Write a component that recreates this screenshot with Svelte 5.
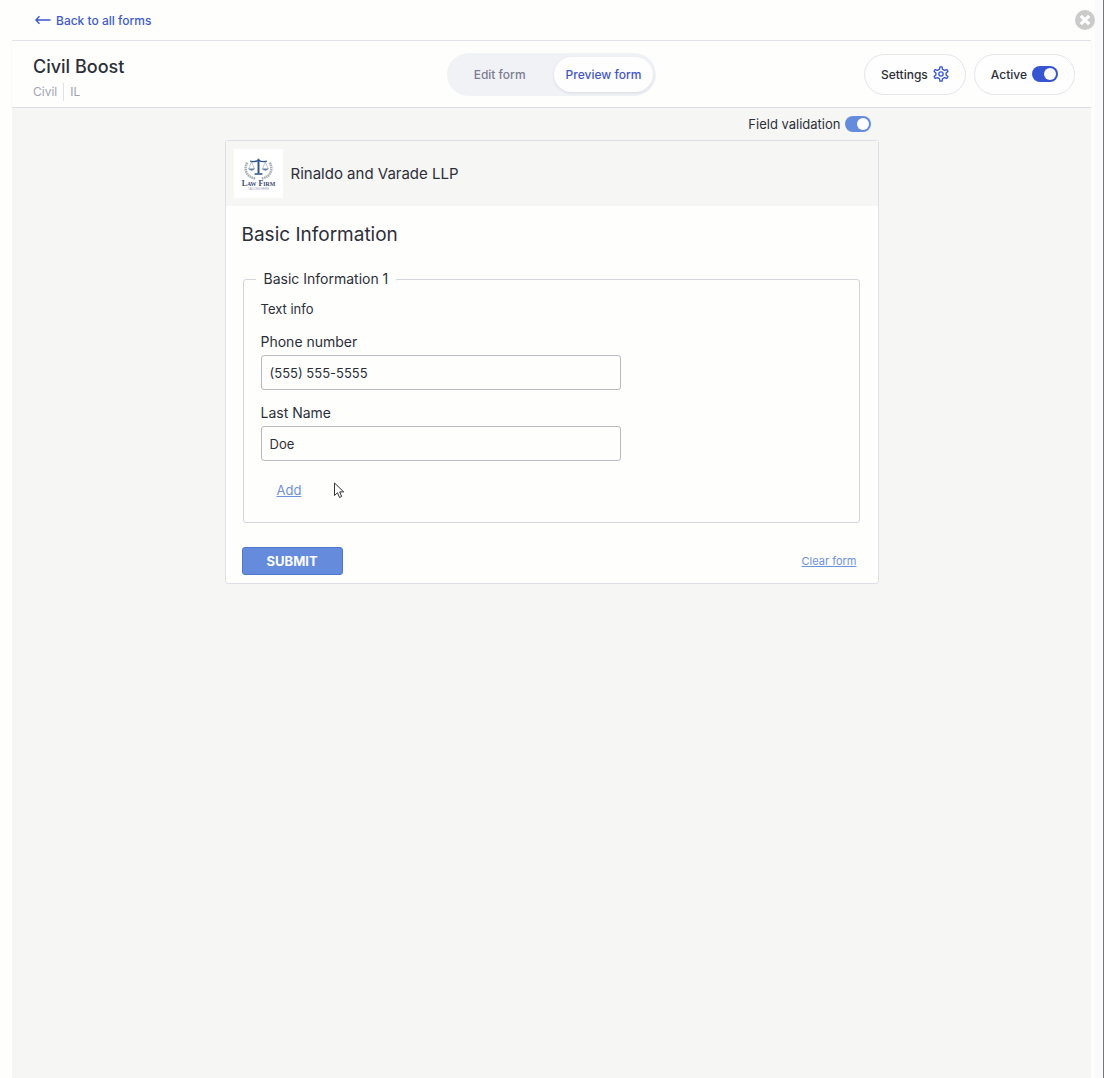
<script>
  let active = $state(true);
  let validation = $state(true);
  let phone = $state('(555) 555-5555');
  let lastName = $state('Doe');

  function clearForm() {
    phone = '';
    lastName = '';
  }
</script>

<div class="modal">
  <button class="close" aria-label="Close">
    <svg width="20" height="20" viewBox="0 0 20 20" aria-hidden="true">
      <circle cx="10" cy="10" r="10" fill="#cbcbcb" />
      <path d="M5.800 5.800l8.400 8.400M14.200 5.800l-8.400 8.400" stroke="#fff" stroke-width="3.200" />
    </svg>
  </button>

  <nav class="back-bar">
    <a class="back" href="#forms">
      <svg width="16" height="10" viewBox="0 0 16 10" fill="none" stroke="#3a56cd" stroke-width="1.4" aria-hidden="true">
        <path d="M15.500 5H1M4.500 1.300L0.900 5l3.600 3.700" />
      </svg>
      Back to all forms
    </a>
  </nav>

  <header class="header">
    <div class="heading">
      <h1>Civil Boost</h1>
      <div class="meta"><span>Civil</span><span class="state">IL</span></div>
    </div>
    <div class="tabs">
      <button class="tab">Edit form</button>
      <button class="tab selected">Preview form</button>
    </div>
    <div class="actions">
      <button class="pill">
        Settings
        <svg width="16" height="16" viewBox="0 0 24 24" fill="none" stroke="#3554d1" stroke-width="2" stroke-linejoin="round" aria-hidden="true">
          <path d="M9.700 4.900L10.400 1.200h3.200l.7 3.700 2.900 1.700 3.600-1.300 1.600 2.800-2.800 2.300v3.200l2.800 2.300-1.600 2.800-3.600-1.300-2.900 1.700-.7 3.700h-3.200l-.7-3.700-2.900-1.700-3.600 1.300-1.600-2.800 2.800-2.300v-3.200L1.600 8.100l1.600-2.800 3.600 1.300z" />
          <circle cx="12" cy="12" r="3.200" />
        </svg>
      </button>
      <label class="pill">
        Active
        <input class="switch" type="checkbox" role="switch" bind:checked={active} />
      </label>
    </div>
  </header>

  <main class="content">
    <div class="preview">
      <label class="validation">
        Field validation
        <input class="switch light" type="checkbox" role="switch" bind:checked={validation} />
      </label>

      <form class="card" onsubmit={(e) => e.preventDefault()}>
        <div class="firm">
          <svg class="logo" viewBox="0 0 50 50" role="img" aria-label="Law Firm">
            <rect width="50" height="50" fill="#fff" />
            <g fill="none" stroke="#a9b0b8" stroke-width="2.600" stroke-dasharray="1.600 .6">
              <path d="M13.500 14C9.500 21 13 29 22 30" />
              <path d="M36.500 14C40.500 21 37 29 28 30" />
            </g>
            <g fill="none" stroke="#2f568c" stroke-width="1">
              <path d="M16.500 12.500Q21 13.500 25 11.500Q29 13.500 33.500 12.500" stroke-width="1.400" />
              <path d="M18 13l-3 7.500M18 13l3 7.500M32 13l-3 7.500M32 13l3 7.500" stroke="#8ca0b9" stroke-width=".6" />
              <path d="M25 10v15" stroke-width="2" />
              <path d="M21 25.500h8" stroke-width="1.600" />
            </g>
            <path d="M14.500 20h7q-1 2.200-3.500 2.200t-3.500-2.200zM28.500 20h7q-1 2.200-3.500 2.200t-3.500-2.200z" fill="#6983a5" />
            <text x="25" y="38" text-anchor="middle" class="logo-name">L<tspan class="small">AW</tspan> F<tspan class="small">IRM</tspan></text>
            <text x="25" y="42" text-anchor="middle" class="logo-tag">TAGLINE HERE</text>
          </svg>
          <span>Rinaldo and Varade LLP</span>
        </div>

        <div class="body">
          <h2>Basic Information</h2>
          <fieldset>
            <legend>Basic Information 1</legend>
            <p>Text info</p>
            <div class="field">
              <label for="phone">Phone number</label>
              <input id="phone" type="tel" bind:value={phone} />
            </div>
            <div class="field">
              <label for="last-name">Last Name</label>
              <input id="last-name" type="text" bind:value={lastName} />
            </div>
            <div class="add-row">
              <a href="#add">Add</a>
              <svg class="cursor" width="12" height="17" viewBox="0 0 12 17" aria-hidden="true">
                <path d="M1.500 1v12.500l3-2.800 2 4.800 2.200-1-2-4.600h4z" fill="#fff" stroke="#333" />
              </svg>
            </div>
          </fieldset>
          <div class="footer">
            <button class="submit" type="submit">SUBMIT</button>
            <button class="clear" type="button" onclick={clearForm}>Clear form</button>
          </div>
        </div>
      </form>
    </div>
  </main>
</div>

<style>
  :global(body) {
    background: #fefefd;
    color: #2d2f38;
    font-family: Inter, 'Liberation Sans', sans-serif;
    font-size: 13px;
  }
  .modal {
    box-sizing: border-box;
    position: relative;
    min-height: 100vh;
    display: flex;
    flex-direction: column;
    padding: 0 4px 0 12px;
    border-right: 1px solid #77777a;
    background: linear-gradient(to left, #fafafd 8px, #fefefd 8px);
  }
  button {
    font-family: inherit;
    cursor: pointer;
  }
  .close {
    position: absolute;
    top: 10px;
    right: 8px;
    padding: 0;
    border: 0;
    background: none;
    line-height: 0;
  }
  .back-bar,
  .header,
  .content {
    margin-right: 8px;
  }
  .back-bar {
    display: flex;
    align-items: center;
    height: 40px;
    padding: 0 23px;
    border-bottom: 1px solid #e3e4e9;
  }
  .back {
    display: flex;
    align-items: center;
    gap: 5px;
    color: #3f5bcb;
    font-size: 12px;
    font-weight: 500;
    text-decoration: none;
  }
  .header {
    display: grid;
    grid-template-columns: 1fr auto 1fr;
    align-items: center;
    height: 66px;
    padding: 0 16px;
    border-bottom: 1px solid #dcdde2;
    box-shadow: 0 1px 2px #0000000d;
  }
  h1 {
    margin: 0;
    font-size: 18px;
    line-height: 24px;
    font-weight: 500;
  }
  .heading {
    display: grid;
    gap: 4px;
    padding: 8px 0 0 5px;
  }
  .meta {
    display: flex;
    gap: 6px;
    color: #a3a4b1;
    font-size: 12px;
    line-height: 18px;
  }
  .state {
    padding-left: 6px;
    border-left: 1px solid #dfe0e8;
  }
  .tabs {
    display: flex;
    padding: 4px 3px;
    border-radius: 22px;
    background: #f1f2f6;
  }
  .tab {
    height: 35px;
    padding: 0 12px;
    border: 0;
    border-radius: 18px;
    background: none;
    color: #7c7e92;
    font-size: 12px;
    font-weight: 500;
  }
  .tab:first-child {
    padding: 0 28px 0 24px;
  }
  .tab.selected {
    background: #fefefe;
    color: #4356c9;
    box-shadow: 0 1px 3px #30407020;
  }
  .actions {
    display: flex;
    justify-content: flex-end;
    gap: 8px;
  }
  .pill {
    box-sizing: border-box;
    display: flex;
    align-items: center;
    gap: 5px;
    height: 41px;
    padding: 0 16px;
    border: 1px solid #e4e4ec;
    border-radius: 21px;
    background: #fefefe;
    color: #2d2f38;
    font-size: 12px;
    font-weight: 500;
  }
  .switch {
    appearance: none;
    box-sizing: border-box;
    width: 26px;
    height: 16px;
    margin: 0;
    padding: 2px;
    border-radius: 8px;
    background: #b5b8c5;
    display: flex;
  }
  .switch::before {
    content: '';
    width: 12px;
    height: 12px;
    border-radius: 50%;
    background: #fdfdff;
  }
  .switch:checked {
    justify-content: flex-end;
    background: #3855d1;
  }
  .light:checked {
    background: #648bdc;
  }
  .content {
    flex: 1;
    padding: 8px 16px 32px;
    background: #f6f6f5;
  }
  .preview {
    max-width: 654px;
    margin: 0 auto;
  }
  .validation {
    display: flex;
    align-items: center;
    justify-content: flex-end;
    gap: 4px;
    height: 16px;
    margin: 0 8px 8px;
  }
  .card {
    border: 1px solid #dedfe5;
    border-radius: 3px;
    background: #fefefd;
  }
  .firm {
    display: flex;
    align-items: center;
    gap: 8px;
    padding: 8px;
    background: #f6f6f5;
    font-size: 15px;
  }
  .logo {
    width: 49px;
    height: 49px;
  }
  .logo-name {
    font: bold 8px 'Liberation Serif', serif;
    fill: #3b4a6d;
  }
  .small {
    font-size: 6px;
  }
  .logo-tag {
    font: 3px 'Liberation Sans', sans-serif;
    fill: #9aa6b8;
  }
  .body {
    padding: 16px 18px 8px 16px;
  }
  h2 {
    margin: 0 0 22px;
    font-size: 19px;
    line-height: 26px;
    font-weight: 400;
  }
  fieldset {
    margin: 0 0 24px 1px;
    padding: 11px 17px 22px;
    border: 1px solid #d5d6dc;
    border-radius: 3px;
  }
  legend {
    margin-left: -5px;
    padding: 0 8px;
    font-size: 14px;
    line-height: 18px;
  }
  p {
    margin: 0 0 13px;
    line-height: 20px;
  }
  .field {
    display: grid;
    gap: 3px;
    max-width: 360px;
    margin-bottom: 13px;
  }
  .field label {
    font-size: 14px;
    line-height: 20px;
  }
  .field input {
    box-sizing: border-box;
    width: 100%;
    height: 35px;
    padding: 0 8px;
    border: 1px solid #b9bac0;
    border-radius: 3px;
    background: #fefefd;
    color: inherit;
    font: 13px Inter, 'Liberation Sans', sans-serif;
  }
  .add-row {
    display: flex;
    align-items: center;
    gap: 32px;
    padding: 6px 16px 0;
    line-height: 20px;
  }
  .add-row a,
  .clear {
    color: #6d91db;
    text-decoration: underline;
  }
  .footer {
    display: flex;
    align-items: center;
    justify-content: space-between;
  }
  .submit {
    height: 28px;
    padding: 0 24px;
    border: 1px solid #4f78cc;
    border-radius: 3px;
    background: #648bdc;
    color: #fefefe;
    font-size: 13px;
    font-weight: 700;
  }
  .clear {
    padding: 0 3px;
    border: 0;
    background: none;
    font-size: 11px;
  }
</style>
